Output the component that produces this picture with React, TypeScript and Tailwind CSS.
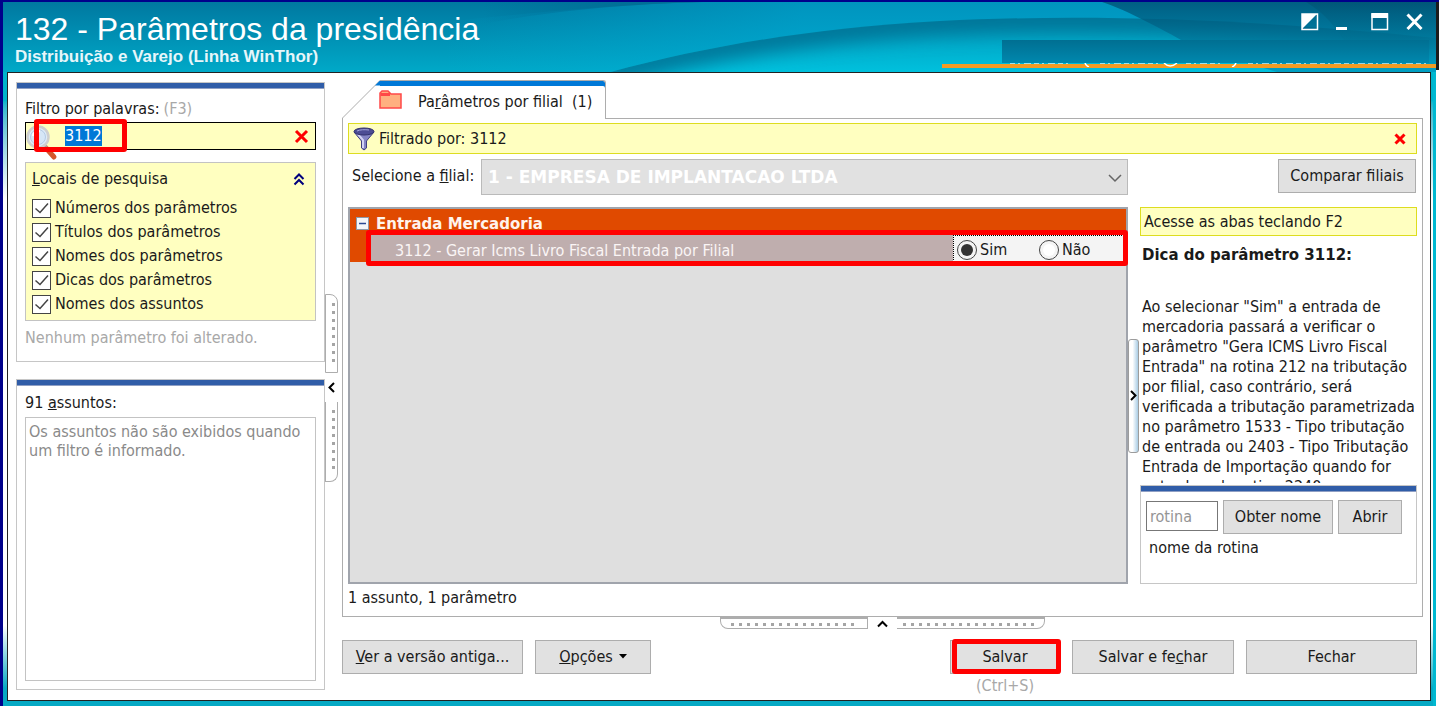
import { useEffect, useRef, type ReactNode } from 'react';
import { clsx } from 'clsx';

const searchPlaces = [
  'Números dos parâmetros',
  'Títulos dos parâmetros',
  'Nomes dos parâmetros',
  'Dicas dos parâmetros',
  'Nomes dos assuntos',
];

function Highlight({ className }: { className: string }) {
  return (
    <div className={clsx('pointer-events-none absolute z-20 rounded-[3px] border-[5px] border-[#ff0000]', className)} />
  );
}

function Panel({ className, children }: { className?: string; children: ReactNode }) {
  return (
    <section className={clsx('border border-[#c6c6c6]', className)}>
      <div className="h-[6px] shrink-0 border-b border-[#8f9fc4] bg-[#305da8]" />
      {children}
    </section>
  );
}

function Button({ className, children }: { className?: string; children: ReactNode }) {
  return (
    <button type="button" className={clsx('h-[34px] border border-[#adadad] bg-[#e1e1e1] pb-px', className)}>
      {children}
    </button>
  );
}

const swellEdge = 'M600 72C700 45 800 27 937 19C1080 12 1240 16 1433 36';

function HeaderWaves() {
  return (
    <svg className="absolute inset-0 h-full w-full" viewBox="0 0 1433 70" preserveAspectRatio="none" aria-hidden="true">
      <defs>
        <linearGradient id="base" x1="0" y1="0" x2="0" y2="1">
          <stop offset="0" stopColor="#0078a0" />
          <stop offset="1" stopColor="#00a9c8" />
        </linearGradient>
        <linearGradient id="glow" gradientUnits="userSpaceOnUse" x1="440" y1="0" x2="800" y2="0">
          <stop offset="0" stopColor="#00b0dc" stopOpacity="0" />
          <stop offset="1" stopColor="#00b0dc" stopOpacity="0.5" />
        </linearGradient>
        <linearGradient id="crest" gradientUnits="userSpaceOnUse" x1="480" y1="0" x2="620" y2="0">
          <stop offset="0" stopColor="#006a92" stopOpacity="0" />
          <stop offset="1" stopColor="#006a92" stopOpacity="0.7" />
        </linearGradient>
        <linearGradient id="swell" x1="0" y1="0" x2="0" y2="1">
          <stop offset="0" stopColor="#0098ba" />
          <stop offset="1" stopColor="#00c2de" />
        </linearGradient>
        <linearGradient id="shade" x1="0" y1="0" x2="0" y2="1">
          <stop offset="0" stopColor="#00486a" />
          <stop offset="1" stopColor="#0092b8" />
        </linearGradient>
        <linearGradient id="corner" x1="0" y1="0" x2="0" y2="1">
          <stop offset="0" stopColor="#004a68" />
          <stop offset="1" stopColor="#007ea0" />
        </linearGradient>
        <clipPath id="under">
          <path d={`${swellEdge}V70Z`} />
        </clipPath>
        <filter id="soft" filterUnits="userSpaceOnUse" x="500" y="-40" width="1000" height="160">
          <feGaussianBlur stdDeviation="9" />
        </filter>
      </defs>
      <rect width="1433" height="70" fill="url(#base)" />
      <path d="M440 20C520 12 600 3 700 0H1433V70H440Z" fill="url(#glow)" />
      <path d="M480 22C540 10 620 2 700 0H480Z" fill="url(#crest)" />
      <path d={`${swellEdge}V70Z`} fill="url(#swell)" />
      <g clipPath="url(#under)">
        <path d={swellEdge} fill="none" stroke="#006f92" strokeOpacity="0.85" strokeWidth="28" filter="url(#soft)" />
      </g>
      <path d="M1099 0C1126 9 1160 28 1182 40C1204 50 1230 57 1274 70H1433V0Z" fill="url(#shade)" opacity="0.7" />
      <path d="M1303 0C1320 10 1332 24 1342 40L1433 48V0Z" fill="url(#corner)" opacity="0.4" />
    </svg>
  );
}

function Header() {
  return (
    <header className="relative flex h-[70px] shrink-0 justify-between">
      <HeaderWaves />
      <div className="relative pt-[9px] pl-3 font-['Liberation_Sans',sans-serif] text-white">
        <h1 className="text-[32px] leading-[36px]">132 - Parâmetros da presidência</h1>
        <p className="text-[17px] leading-5 font-bold text-[#e6f6fa]">Distribuição e Varejo (Linha WinThor)</p>
      </div>
      <div className="relative flex w-[494px] flex-col justify-between">
        <div className="flex items-center gap-[17px] self-end pt-[11px] pr-[13px]">
          <button type="button" aria-label="Encaixar">
            <svg width="18" height="18" viewBox="0 0 18 18">
              <rect x="1" y="1" width="15.500" height="15.500" fill="none" stroke="white" strokeWidth="1.500" />
              <path d="M1 1H16L1 16Z" fill="white" />
            </svg>
          </button>
          <button type="button" aria-label="Minimizar">
            <svg width="18" height="18" viewBox="0 0 18 18">
              <path d="M0 15.500H11" stroke="white" strokeWidth="3" />
            </svg>
          </button>
          <button type="button" aria-label="Maximizar">
            <svg width="18" height="18" viewBox="0 0 18 18">
              <rect x="1" y="1" width="15.500" height="15.500" fill="none" stroke="white" strokeWidth="1.500" />
              <path d="M0.500 2.500H17" stroke="white" strokeWidth="5" />
            </svg>
          </button>
          <button type="button" aria-label="Fechar janela">
            <svg width="17" height="18" viewBox="0 0 17 18">
              <path d="M1.500 1.500L15.500 16M15.500 1.500L1.500 16" stroke="white" strokeWidth="3" />
            </svg>
          </button>
        </div>
        <div>
          <div className="mr-[7px] ml-[60px] h-[23px] bg-linear-to-b from-[#006f92] to-[#0088ae]" />
          <svg className="-mb-[3px] ml-[68px] block" width="420" height="4" viewBox="0 0 420 4" aria-hidden="true">
            <path
              d="M0 0.500H62M90 0.500H148M176 0.500H214M238 0.500H418"
              stroke="white"
              strokeOpacity="0.6"
              strokeDasharray="5 3 2 4 7 3"
            />
            <path d="M75 0Q76 3 79 4M154 0Q160 6 167 0M226 0Q225 3 222 4" fill="none" stroke="white" strokeWidth="1.500" />
          </svg>
          <div className="mb-1 h-[4px] bg-[#f29b24]" />
        </div>
      </div>
    </header>
  );
}

function VerticalGrip() {
  return (
    <div className="flex w-[17px] shrink-0 flex-col items-start justify-center pb-[7px]">
      <div className="flex h-[79px] w-[13px] justify-end rounded-tr-[8px] border border-[#adadad] py-2 pr-[2px]">
        <div className="w-[3px] bg-[repeating-linear-gradient(to_bottom,#a5a5a5_0_3px,transparent_3px_8px)]" />
      </div>
      <svg className="my-[9px] ml-[2px]" width="9" height="11" viewBox="0 0 9 11">
        <path d="M7 1L2.500 5.500L7 10" fill="none" stroke="black" strokeWidth="2" />
      </svg>
      <div className="flex h-[80px] w-[13px] justify-end rounded-br-[8px] border border-t-0 border-[#adadad] py-2 pr-[2px]">
        <div className="w-[3px] bg-[repeating-linear-gradient(to_bottom,#a5a5a5_0_3px,transparent_3px_8px)]" />
      </div>
    </div>
  );
}

function HorizontalGrip() {
  return (
    <div className="flex h-[23px] items-start justify-center">
      <div className="flex h-[12px] w-[148px] items-end rounded-bl-[8px] border border-t-2 border-[#adadad] px-[10px] pb-[2px]">
        <div className="h-[3px] flex-1 bg-[repeating-linear-gradient(to_right,#a5a5a5_0_3px,transparent_3px_8px)]" />
      </div>
      <svg className="mx-[9px] mt-[3px]" width="11" height="8" viewBox="0 0 11 8">
        <path d="M1 6.500L5.500 2L10 6.500" fill="none" stroke="black" strokeWidth="2" />
      </svg>
      <div className="flex h-[12px] w-[148px] items-end rounded-br-[8px] border border-t-2 border-l-0 border-[#adadad] px-[6px] pb-[2px]">
        <div className="h-[3px] flex-1 bg-[repeating-linear-gradient(to_right,#a5a5a5_0_3px,transparent_3px_8px)]" />
      </div>
    </div>
  );
}

function SearchPanel() {
  const search = useRef<HTMLInputElement>(null);

  useEffect(() => {
    search.current?.focus();
    search.current?.select();
  }, []);

  return (
    <Panel className="h-[280px] shrink-0">
      <div className="px-2 pt-[8px]">
        <label htmlFor="filtro" className="flex h-6 items-center gap-1 pb-px">
          Filtro por palavras: <span className="text-[#a8a8a8]">(F3)</span>
        </label>
        <div className="relative mt-px flex h-[28px] items-center border border-black bg-[#ffffc0]">
          <svg className="absolute top-0 left-0 z-10" width="34" height="38" viewBox="0 0 34 38">
            <path d="M20 25L28 34" stroke="#d4572c" strokeWidth="5" strokeLinecap="round" />
            <path d="M18 22L21 26" stroke="#b4a090" strokeWidth="4" />
            <circle cx="12" cy="14" r="10.500" fill="#dcebf8" stroke="#cfcfcf" strokeWidth="2.500" />
            <circle cx="12" cy="14" r="7.500" fill="#d6e6f6" stroke="#b6cae4" />
            <path d="M7 13C8 9 11 8 14 8" fill="none" stroke="white" strokeWidth="2.500" />
          </svg>
          <input
            ref={search}
            id="filtro"
            defaultValue="3112"
            className="h-5 min-w-0 flex-1 bg-transparent pl-[39px] caret-[#ff8728] outline-none selection:bg-[#0078d7] selection:text-white"
          />
          <button type="button" aria-label="Limpar filtro" className="pr-[6px]">
            <svg width="15" height="15" viewBox="0 0 15 15">
              <path d="M2 2L13 13M13 2L2 13" stroke="#ff0000" strokeWidth="3" />
            </svg>
          </button>
          <Highlight className="-top-[4px] left-[8px] h-[33px] w-[93px]" />
        </div>
        <fieldset className="mt-[12px] h-[159px] border border-[#c3c3c3] bg-[#ffffc0] px-[6px]">
          <div className="flex h-[33px] items-center justify-between pr-[2px] pb-[2px]">
            <span><u>L</u>ocais de pesquisa</span>
            <button type="button" aria-label="Recolher">
              <svg width="16" height="14" viewBox="0 0 16 14">
                <path d="M3.500 7L8 2.500L12.500 7M3.500 12.500L8 8L12.500 12.500" fill="none" stroke="#00007d" strokeWidth="2" />
              </svg>
            </button>
          </div>
          {searchPlaces.map((place) => (
            <label key={place} className="relative flex h-6 items-center gap-[4px]">
              <input type="checkbox" defaultChecked className="size-[19px] appearance-none border border-[#444444] bg-white" />
              <svg className="pointer-events-none absolute top-[3px] left-0" width="19" height="19" viewBox="0 0 19 19">
                <path d="M3.500 9.500L8 13.500L16 4.500" fill="none" stroke="#444444" strokeWidth="1.500" />
              </svg>
              {place}
            </label>
          ))}
        </fieldset>
        <p className="flex h-[34px] items-center text-[#a8a8a8]">Nenhum parâmetro foi alterado.</p>
      </div>
    </Panel>
  );
}

function SubjectsPanel() {
  return (
    <Panel className="mt-[17px] flex min-h-0 flex-1 flex-col">
      <div className="flex flex-1 flex-col px-2 pt-[6px] pb-2">
        <h2 className="flex h-[25px] items-center pb-[3px]">91&nbsp;<u>a</u>ssuntos:</h2>
        <p className="flex-1 border border-[#c3c3c3] px-[3px] pt-[4px] leading-[19px] text-[#8a8a8a]">
          Os assuntos não são exibidos quando um filtro é informado.
        </p>
      </div>
    </Panel>
  );
}

function Tab() {
  return (
    <div className="relative z-10 -mb-px flex h-[39px]">
      <svg width="38" height="39" viewBox="0 0 38 39">
        <path d="M0.500 39V38L38 0.500V39Z" fill="white" />
        <path d="M0.500 39V38L38 0.500" fill="none" stroke="#adadad" />
        <path d="M33 5.500L38 0.500V5.500Z" fill="#0078d7" />
      </svg>
      <button
        type="button"
        className="flex w-[226px] items-center rounded-tr-[3px] border-t border-r border-[#adadad] bg-white shadow-[inset_0_5px_0_#0078d7]"
      >
        <svg className="-ml-px" width="24" height="20" viewBox="0 0 24 20">
          <path d="M1 18V3L3 1H9L12 4H22V18Z" fill="#ffb080" stroke="#ff4848" strokeWidth="1.500" />
          <path d="M1.500 4.500H11" stroke="#ff4848" strokeWidth="3" />
        </svg>
        <span className="ml-[15px] pt-[4px] whitespace-pre">Pa<u>r</u>âmetros por filial  (1)</span>
      </button>
    </div>
  );
}

function ParameterList() {
  return (
    <div className="flex min-w-0 flex-1 flex-col border-2 border-[#a0a4ac] bg-[#dfdfdf]">
      <div className="flex h-[26px] items-center gap-[7px] bg-[#e04a00] pt-[3px] pl-[6px] font-['DejaVu_Sans',sans-serif] text-[15px] font-bold text-[#fff4ec]">
        <svg width="13" height="13" viewBox="0 0 13 13">
          <rect x="0.500" y="0.500" width="12" height="12" fill="#f4f6fa" stroke="#8f98a8" />
          <path d="M3 6.500H10" stroke="#2c4a94" strokeWidth="1.500" />
        </svg>
        Entrada Mercadoria
      </div>
      <div className="relative flex h-[27px] bg-[#e04a00] pl-[20px]">
        <div className="flex flex-1 items-center bg-[#bfaeae] pt-[4px] pl-[25px] text-[#faf5f5]">
          3112 - Gerar Icms Livro Fiscal Entrada por Filial
        </div>
        <div className="flex w-[173px] items-center border border-dotted border-black bg-[#f4f4f4] pt-[3px] pl-[3px]">
          {['Sim', 'Não'].map((option) => (
            <label key={option} className="flex w-[82px] items-center gap-[3px]">
              <input
                type="radio"
                name="parametro-3112"
                defaultChecked={option === 'Sim'}
                className="size-[20px] appearance-none rounded-full border border-[#444444] bg-white bg-clip-content p-[3px] checked:bg-[#333333]"
              />
              {option}
            </label>
          ))}
        </div>
        <Highlight className="-top-[5px] -right-[2px] -bottom-[4px] left-[16px]" />
      </div>
    </div>
  );
}

function TipColumn() {
  return (
    <aside className="flex w-[277px] shrink-0 flex-col">
      <p className="flex h-[29px] shrink-0 items-center border border-[#dddd20] bg-[#ffffc0] px-[3px]">
        Acesse as abas teclando F2
      </p>
      <h3 className="mt-[9px] shrink-0 px-[2px] font-['DejaVu_Sans',sans-serif] text-[15px] leading-5 font-bold">
        Dica do parâmetro 3112:
      </h3>
      <p className="mt-8 mb-[2px] min-h-0 flex-1 overflow-hidden pl-[2px] leading-5">
        Ao selecionar "Sim" a entrada de<br />
        mercadoria passará a verificar o<br />
        parâmetro "Gera ICMS Livro Fiscal<br />
        Entrada" na rotina 212 na tributação<br />
        por filial, caso contrário, será<br />
        verificada a tributação parametrizada<br />
        no parâmetro 1533 - Tipo tributação<br />
        de entrada ou 2403 - Tipo Tributação<br />
        Entrada de Importação quando for<br />
        entrada pela rotina 2240.
      </p>
      <Panel className="h-[99px] shrink-0">
        <div className="flex items-start gap-[5px] px-[5px] pt-[8px]">
          <input
            aria-label="rotina"
            placeholder="rotina"
            className="mt-px h-[30px] w-[72px] border border-[#777777] px-[3px] outline-none placeholder:text-[#959595]"
          />
          <Button className="w-[110px]">Obter nome</Button>
          <Button className="w-[64px]">Abrir</Button>
        </div>
        <p className="px-2 pt-[4px] leading-5">nome da rotina</p>
      </Panel>
    </aside>
  );
}

function MainArea() {
  return (
    <main className="flex min-w-0 flex-1 flex-col">
      <div className="-mt-[2px]">
        <Tab />
      </div>
      <div className="flex min-h-0 flex-1 flex-col border border-[#adadad] px-[5px] pt-[4px]">
        <div className="flex h-[31px] shrink-0 items-center border border-[#dddd20] bg-[#ffffc0] pr-[10px] pl-[4px]">
          <svg width="23" height="24" viewBox="0 0 23 24">
            <path d="M1 5L8.500 14V21L11 23L13.500 21V14L21 5Z" fill="#8484c4" stroke="#404080" />
            <path d="M4 6L10 13V21" fill="none" stroke="#d4d4f4" strokeWidth="2" />
            <ellipse cx="11" cy="4.500" rx="10" ry="3.500" fill="#4c4c94" stroke="#30306c" />
            <path d="M4 4C7 2.500 12 2.500 16 3" fill="none" stroke="#a4a4dc" />
          </svg>
          <span className="ml-[3px] flex-1">Filtrado por: 3112</span>
          <button type="button" aria-label="Remover filtro">
            <svg width="12" height="12" viewBox="0 0 12 12">
              <path d="M1.500 1.500L10.500 10.500M10.500 1.500L1.500 10.500" stroke="#ff0000" strokeWidth="3" />
            </svg>
          </button>
        </div>
        <div className="mt-[5px] flex shrink-0 items-start">
          <label htmlFor="filial" className="w-[133px] shrink-0 pt-[7px] pl-[4px] leading-5">
            Selecione a <u>f</u>ilial:
          </label>
          <div className="relative min-w-0 flex-1">
            <select
              id="filial"
              disabled
              className="h-[36px] w-full appearance-none border border-[#bababa] bg-[#e1e1e1] px-[6px] font-['DejaVu_Sans',sans-serif] text-[17px] font-bold text-white opacity-100"
            >
              <option>1 - EMPRESA DE IMPLANTACAO LTDA</option>
            </select>
            <svg className="pointer-events-none absolute top-[14px] right-[6px]" width="14" height="10" viewBox="0 0 14 10">
              <path d="M1 2L7 8L13 2" fill="none" stroke="#666666" strokeWidth="1.500" />
            </svg>
          </div>
          <Button className="mr-px ml-[150px] w-[138px] shrink-0">Comparar filiais</Button>
        </div>
        <div className="mt-[12px] flex min-h-0 flex-1">
          <ParameterList />
          <div className="flex w-[12px] shrink-0 items-center">
            <button
              type="button"
              aria-label="Recolher dica"
              className="flex h-[114px] w-[11px] items-center justify-center rounded-[3px] border border-[#9c9c9c] bg-linear-to-r from-white from-40% to-[#a9cce4]"
            >
              <svg width="9" height="11" viewBox="0 0 9 11" className="shrink-0">
                <path d="M2 1L6.500 5.500L2 10" fill="none" stroke="black" strokeWidth="2" />
              </svg>
            </button>
          </div>
          <TipColumn />
        </div>
        <p className="flex h-[32px] shrink-0 items-center pb-[4px]">1 assunto, 1 parâmetro</p>
      </div>
      <HorizontalGrip />
      <div className="flex h-[60px] shrink-0 items-start gap-[12px] pr-[6px]">
        <Button className="w-[181px]"><u>V</u>er a versão antiga...</Button>
        <Button className="flex w-[116px] items-center justify-center gap-[6px]">
          <span><u>O</u>pções</span>
          <svg width="8" height="5" viewBox="0 0 8 5">
            <path d="M0 0H8L4 4.500Z" fill="black" />
          </svg>
        </Button>
        <div className="relative ml-auto flex w-[110px] flex-col">
          <Button>Salvar</Button>
          <span className="pt-[2px] text-center leading-5 text-[#a8a8a8]">(Ctrl+S)</span>
          <Highlight className="-top-px left-[2px] h-[35px] w-[109px]" />
        </div>
        <Button className="w-[162px]">Salvar e fe<u>c</u>har</Button>
        <Button className="w-[171px]">Fechar</Button>
      </div>
    </main>
  );
}

export default function App() {
  return (
    <div className="flex h-screen min-h-[640px] min-w-[1080px] border-t-2 border-l-[3px] border-[#00008b] font-['DejaVu_Sans_Condensed','DejaVu_Sans',sans-serif] text-base leading-5 text-[#1a1a1a]">
      <div className="flex min-w-0 flex-1 flex-col border-r-[3px] border-[#00b8d0] bg-linear-to-b from-[#00b4cc] from-14% via-white via-28% to-white to-88%">
        <div className="-mr-[3px]">
          <Header />
        </div>
        <div className="flex min-h-0 flex-1 border-b-[5px] border-[#06a9c4] bg-linear-to-b from-transparent from-88% to-[#06a9c4] to-98% pr-[2px] pl-[4px]">
          <div className="flex min-w-0 flex-1 border border-[#222222] bg-white pt-[9px] pr-[7px] pl-[8px]">
            <div className="flex w-[309px] shrink-0 flex-col pb-[10px]">
              <SearchPanel />
              <SubjectsPanel />
            </div>
            <VerticalGrip />
            <MainArea />
          </div>
        </div>
      </div>
      <div className="flex w-[3px] flex-col bg-white">
        <div className="h-[68px] bg-[#1c1c1c]" />
      </div>
    </div>
  );
}
